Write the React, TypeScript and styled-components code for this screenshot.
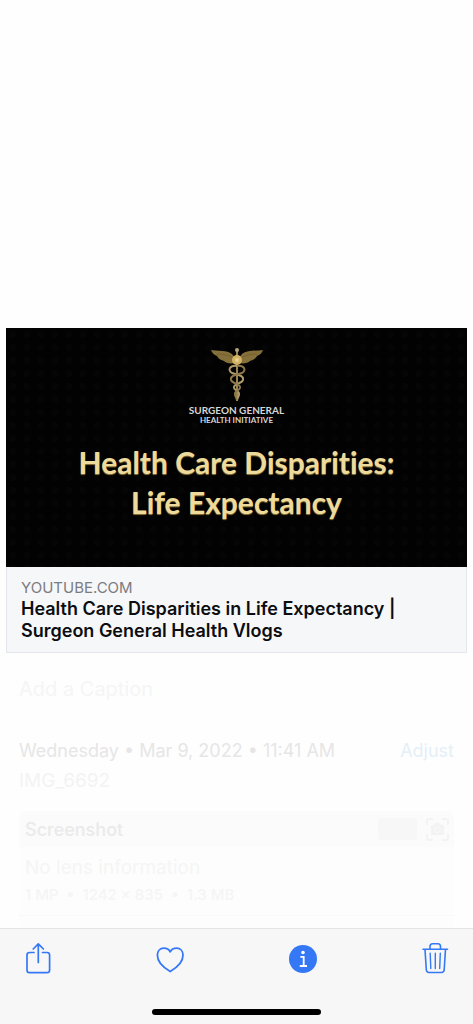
import React from "react";
import styled, { createGlobalStyle } from "styled-components";

const GlobalStyle = createGlobalStyle`
  * { box-sizing: border-box; }
  body {
    margin: 0;
    background: #fefefe;
    font-family: Inter, "Liberation Sans", sans-serif;
  }
  h1, h2, p { margin: 0; }
`;

const Screen = styled.div`
  display: flex;
  flex-direction: column;
  min-height: 100vh;
`;

const Content = styled.main`
  flex: 1;
  display: flex;
  flex-direction: column;
  padding-top: 328px;
`;

const LinkCard = styled.a`
  display: block;
  margin: 0 6px;
  color: #0c0d10;
  text-decoration: none;
`;

const Poster = styled.div`
  display: flex;
  flex-direction: column;
  align-items: center;
  min-height: 239px;
  padding-top: 18px;
  background-color: #020202;
  background-image: radial-gradient(circle, #050505 3px, transparent 4px);
  background-size: 14px 13px;
  text-align: center;
`;

const Emblem = styled.svg`
  display: block;
  width: 54px;
  height: 58px;
`;

const Organization = styled.p<{ $small?: boolean }>`
  font-family: Lato, "Liberation Sans", sans-serif;
  font-weight: 700;
  font-size: ${(p) => (p.$small ? 8 : 10)}px;
  line-height: ${(p) => (p.$small ? 8 : 12)}px;
  color: #d6d6d6;
`;

const PosterTitle = styled.h1`
  margin-top: 18px;
  font-family: Lato, "Liberation Sans", sans-serif;
  font-weight: 700;
  font-size: 30px;
  line-height: 40px;
  font-variant-ligatures: none;
  color: #ecdb9c;
  text-shadow: 0 1px 1px #8f7434;
`;

const LinkInfo = styled.div`
  min-height: 85px;
  padding: 10px 14px;
  border: 1px solid #e3e6ea;
  border-top: 0;
  background: #f6f7f9;
`;

const Domain = styled.p`
  font-size: 15px;
  line-height: 21px;
  color: #7b7c80;
`;

const LinkTitle = styled.h2`
  font-weight: 600;
  font-size: 18px;
  line-height: 22px;
`;

const Details = styled.section`
  display: flex;
  flex-direction: column;
  padding: 22px 19px 0;
`;

const CaptionInput = styled.input`
  width: 100%;
  height: 28px;
  padding: 0;
  border: 0;
  outline: 0;
  background: transparent;
  font: 400 20px/28px Inter, "Liberation Sans", sans-serif;
  color: #e8e8e8;
  &::placeholder { color: #f5f5f5; opacity: 1; }
`;

const DateRow = styled.div`
  display: flex;
  justify-content: space-between;
  margin-top: 33px;
  font-size: 18px;
  line-height: 30px;
  color: #e6e6e6;
`;

const AdjustButton = styled.button`
  padding: 0;
  border: 0;
  background: none;
  font: inherit;
  color: #e4eff8;
`;

const FileName = styled.p`
  font-size: 19px;
  line-height: 30px;
  color: #f3f3f3;
`;

const MetaCard = styled.div`
  margin-top: 15px;
  padding-bottom: 11px;
  border-radius: 8px 8px 0 0;
  background: #fdfdfd;
  overflow: hidden;
`;

const MetaHeader = styled.div`
  display: flex;
  align-items: center;
  gap: 9px;
  height: 36px;
  padding: 0 5px 0 6px;
  background: #fbfbfb;
  color: #eaeaea;
  font-weight: 500;
  font-size: 18px;
`;

const MetaName = styled.span`
  flex: 1;
`;

const FormatTag = styled.span`
  width: 39px;
  height: 22px;
  border-radius: 3px;
  background: #f7f7f7;
`;

const MetaBody = styled.div`
  padding: 8px 6px 6px;
  border-bottom: 1px solid #f9f9f9;
  color: #f5f5f5;
`;

const Lens = styled.p`
  font-size: 19px;
  line-height: 26px;
`;

const Numbers = styled.p`
  font-size: 15px;
  line-height: 28px;
  white-space: pre;
  font-weight: 500;
`;

const Footer = styled.footer`
  position: sticky;
  bottom: 0;
  height: 96px;
  border-top: 1px solid #e4e4e5;
  background: #f7f7f7;
`;

const Toolbar = styled.nav`
  display: flex;
  justify-content: space-between;
  padding: 12px 20px 0;
`;

const ToolButton = styled.button`
  display: grid;
  place-items: center;
  width: 36px;
  height: 36px;
  padding: 0;
  border: 0;
  background: none;
  color: #3578f6;
`;

const HomeIndicator = styled.div`
  width: 169px;
  height: 6px;
  margin: 32px auto 0;
  border-radius: 3px;
  background: #000;
`;

const Caduceus = () => (
  <Emblem viewBox="0 0 54 58" fill="none" aria-hidden="true">
    <path
      d="M1 4C8 5 17 4 22 8L26 13L25 17C20 18 16 17 14 15C10 14 8 12 7 10C4 9 2 7 1 4ZM53 4C46 5 37 4 32 8L28 13L29 17C34 18 38 17 40 15C44 14 46 12 47 10C50 9 52 7 53 4Z"
      fill="#85703b"
    />
    <path d="M7 8C13 8 19 9 23 12M47 8C41 8 35 9 31 12" stroke="#76622f" />
    <path d="M27 5V55" stroke="#9a8452" strokeWidth="2" />
    <circle cx="27" cy="4" r="2" fill="#b7a67c" />
    <path
      d="M27 20C20 19 17 24 22 27C27 29 34 29 33 34C32 38 23 37 24 42C25 45 30 45 29 49L27 54"
      stroke="#b09a69"
      strokeWidth="2"
    />
    <path
      d="M27 20C34 19 37 24 32 27C27 29 20 29 21 34C22 38 31 37 30 42C29 45 24 45 25 49L27 54"
      stroke="#8e784a"
      strokeWidth="2"
    />
    <circle cx="27" cy="14" r="5" fill="#d2b365" />
    <circle cx="27" cy="14" r="2" fill="#e8cf8b" />
  </Emblem>
);

const ShareIcon = () => (
  <svg width="36" height="36" viewBox="0 0 36 36" fill="none" stroke="currentColor" strokeWidth="1.7" strokeLinecap="round" strokeLinejoin="round" aria-hidden="true">
    <path d="M14 11.5H9.5Q7 11.5 7 14V29Q7 31.7 9.5 31.7H27Q29.6 31.7 29.6 29V14Q29.6 11.5 27 11.5H22.5M18.3 21.5V3M13.2 8L18.3 2.9L23.4 8" />
  </svg>
);

const HeartIcon = () => (
  <svg width="36" height="36" viewBox="0 0 36 36" fill="none" stroke="currentColor" strokeWidth="1.8" strokeLinejoin="round" aria-hidden="true">
    <path d="M18.2 30.5C13 27.5 5.4 21.5 5.4 14.3C5.4 10 8.2 7.2 11.8 7.2C14.8 7.2 16.9 8.4 18.2 10.8C19.5 8.4 21.6 7.2 24.6 7.2C28.2 7.2 31 10 31 14.3C31 21.5 23.4 27.5 18.2 30.5Z" />
  </svg>
);

const InfoIcon = () => (
  <svg width="36" height="36" viewBox="0 0 36 36" fill="none" aria-hidden="true">
    <circle cx="18" cy="18" r="14" fill="currentColor" />
    <circle cx="18" cy="11.5" r="1.8" fill="#fff" />
    <path d="M15.4 15.8H18.7V25M14.8 25H22" stroke="#fff" strokeWidth="1.8" />
  </svg>
);

const TrashIcon = () => (
  <svg width="36" height="36" viewBox="0 0 36 36" fill="none" stroke="currentColor" strokeWidth="1.6" strokeLinecap="round" strokeLinejoin="round" aria-hidden="true">
    <path d="M6 8.3H30.5M13 8V5.5Q13 2.8 15.5 2.8H21Q23.5 2.8 23.5 5.5V8M8 8.5L9.3 28.8Q9.5 31.5 12 31.5H24.5Q27 31.5 27.2 28.8L28.5 8.5" />
    <path d="M13.2 12.3L13.8 27.5M18.3 12.3V27.5M23.3 12.3L22.7 27.5" strokeWidth="1.4" />
  </svg>
);

const CaptureIcon = () => (
  <svg width="23" height="23" viewBox="0 0 23 23" fill="none" aria-hidden="true">
    <path d="M1 7V3Q1 1 3 1H7M16 1H20Q22 1 22 3V7M22 16V20Q22 22 20 22H16M7 22H3Q1 22 1 20V16" stroke="#f3f3f3" strokeWidth="2" />
    <path d="M5 7H8L9 5H14L15 7H18V17H5Z" fill="#f3f3f3" />
    <circle cx="11.5" cy="11.5" r="3" stroke="#fafafa" />
  </svg>
);

export default function App() {
  return (
    <Screen>
      <GlobalStyle />
      <Content>
        <LinkCard href="#video">
          <Poster>
            <Caduceus />
            <Organization>SURGEON GENERAL</Organization>
            <Organization $small>HEALTH INITIATIVE</Organization>
            <PosterTitle>
              Health Care Disparities:
              <br />
              Life Expectancy
            </PosterTitle>
          </Poster>
          <LinkInfo>
            <Domain>YOUTUBE.COM</Domain>
            <LinkTitle>Health Care Disparities in Life Expectancy | Surgeon General Health Vlogs</LinkTitle>
          </LinkInfo>
        </LinkCard>
        <Details>
          <CaptionInput aria-label="Caption" placeholder="Add a Caption" />
          <DateRow>
            <span>Wednesday • Mar 9, 2022 • 11:41 AM</span>
            <AdjustButton type="button">Adjust</AdjustButton>
          </DateRow>
          <FileName>IMG_6692</FileName>
          <MetaCard>
            <MetaHeader>
              <MetaName>Screenshot</MetaName>
              <FormatTag />
              <CaptureIcon />
            </MetaHeader>
            <MetaBody>
              <Lens>No lens information</Lens>
              <Numbers>1 MP  •  1242 × 835  •  1.3 MB</Numbers>
            </MetaBody>
          </MetaCard>
        </Details>
      </Content>
      <Footer>
        <Toolbar aria-label="Photo actions">
          <ToolButton type="button" aria-label="Share"><ShareIcon /></ToolButton>
          <ToolButton type="button" aria-label="Favorite"><HeartIcon /></ToolButton>
          <ToolButton type="button" aria-label="Info"><InfoIcon /></ToolButton>
          <ToolButton type="button" aria-label="Delete"><TrashIcon /></ToolButton>
        </Toolbar>
        <HomeIndicator />
      </Footer>
    </Screen>
  );
}
